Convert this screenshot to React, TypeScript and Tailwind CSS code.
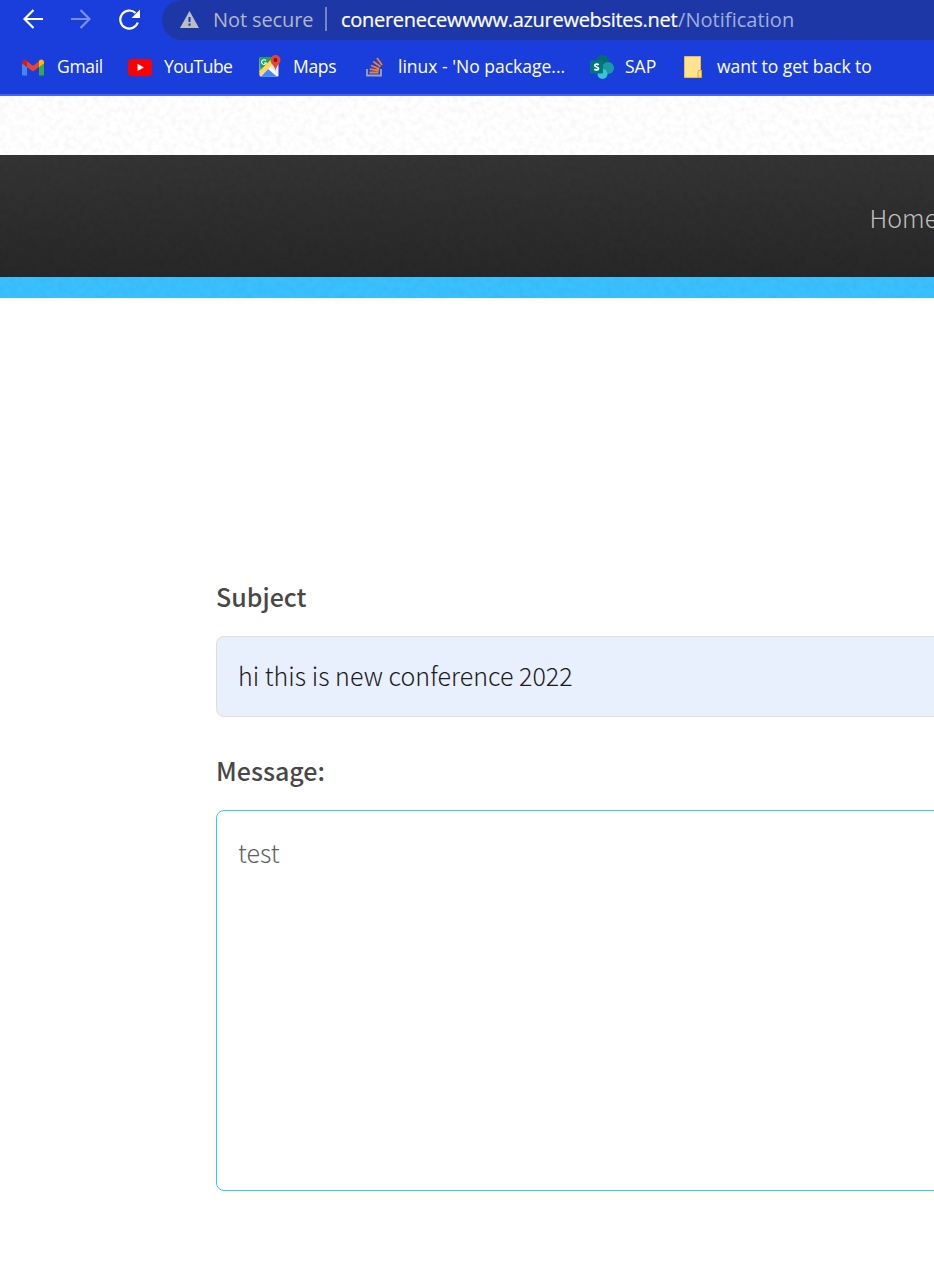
import type { ReactNode } from 'react';

const ui = "font-['Open_Sans','Noto_Sans',sans-serif]";
const page = "font-['Noto_Sans_CJK_SC',sans-serif]";

function Grain({ id, dark, opacity }: { id: string; dark: string; opacity: number }) {
  return (
    <svg className="absolute inset-0 h-full w-full" aria-hidden="true">
      <filter id={id} x="0" y="0" width="100%" height="100%">
        <feTurbulence type="fractalNoise" baseFrequency="0.17" numOctaves="3" seed="7" />
        <feColorMatrix values={`0 0 0 0 ${dark} 0 0 0 0 ${dark} 0 0 0 0 ${dark} ${opacity} 0 0 0 ${-opacity * 0.38}`} />
      </filter>
      <rect width="100%" height="100%" filter={`url(#${id})`} />
    </svg>
  );
}

function Bookmark({ icon, width, children }: { icon: ReactNode; width: string; children: ReactNode }) {
  return (
    <div className={`flex shrink-0 items-center ${width}`}>
      {icon}
      <span className="pb-[2px]">{children}</span>
    </div>
  );
}

function Gmail() {
  return (
    <svg className="mr-[13px] h-[17px] w-[22px] shrink-0" viewBox="0 0 22 17">
      <path d="M0 4v11.500Q0 16.500 1 16.500H5V7.500z" fill="#4285f4" />
      <path d="M22 4v11.500Q22 16.500 21 16.500H17V7.500z" fill="#34a853" />
      <path d="M5 2.200 11 6.700 17 2.200V8L11 12.500 5 8z" fill="#ea4335" />
      <path d="M0 4V3C0 .6 2.600-.2 4.200 1L5 1.700V8L0 4.500z" fill="#c5221f" />
      <path d="M22 4V3C22 .6 19.400-.2 17.800 1L17 1.700V8L22 4.500z" fill="#fbbc04" />
    </svg>
  );
}

function YouTube() {
  return (
    <svg className="mr-[12px] h-[17px] w-[24px] shrink-0" viewBox="0 0 24 17">
      <rect width="24" height="17" rx="3.500" fill="#f00" />
      <path d="M9.500 4.800 16 8.500 9.500 12z" fill="#fff" />
    </svg>
  );
}

function Maps() {
  return (
    <svg className="mb-[2px] mr-[12px] h-[22px] w-[22px] shrink-0" viewBox="0 0 22 22">
      <rect x="0.500" y="2" width="19" height="19.500" rx="1.500" fill="#e8eaed" />
      <path d="M.5 3.500Q.5 2 2 2H15L1.500 17z" fill="#1fa05b" />
      <path d="M.5 16 13 3.500 16 6.500 1 21z" fill="#ffda44" />
      <path d="M2 21.500 10.500 12.500 19.500 21.500z" fill="#4a89f3" />
      <path d="m9 14 2-2 8.500 8.500-1.500 1z" fill="#fff" />
      <path d="M7 5.700A2.400 2.400 0 1 0 7.300 8H5" fill="none" stroke="#fff" strokeWidth="1.100" />
      <path d="M16.500 0A5 5 0 0 0 11.500 5C11.500 9 15.500 10 16.500 15.500 17.500 10 21.500 9 21.500 5A5 5 0 0 0 16.500 0z" fill="#ea4335" />
      <circle cx="16.500" cy="5" r="1.900" fill="#811411" />
    </svg>
  );
}

function StackOverflow() {
  return (
    <svg className="mr-[14px] h-[20px] w-[18px] shrink-0" viewBox="0 0 18 20">
      <path d="M1 12v6.500H15V12" fill="none" stroke="#bcbbbb" strokeWidth="1.800" opacity=".8" />
      <path d="M3.500 15.500h9M3.800 12.200l9 1.300M5 8.500l8.300 3.300M7.300 4.500l7.200 5.200M11 1l5 7" fill="none" stroke="#f48024" strokeWidth="1.800" />
    </svg>
  );
}

function SharePoint() {
  return (
    <svg className="mr-[11px] h-[24px] w-[24px] shrink-0" viewBox="0 0 24 24">
      <circle cx="12.500" cy="6.500" r="6.500" fill="#036c70" />
      <circle cx="18" cy="13" r="6" fill="#1a9ba1" />
      <circle cx="12.500" cy="19" r="5" fill="#37c6d0" />
      <rect x="0" y="5.500" width="13" height="13" rx="1" fill="#03787c" />
      <path d="M8.700 9.700C7.600 8.900 4.800 8.700 4.700 10.500 4.700 12.300 8.500 11.700 8.500 13.600 8.400 15.300 5.500 15.200 4.300 14.300" fill="none" stroke="#fff" strokeWidth="1.700" />
    </svg>
  );
}

function Folder() {
  return (
    <svg className="mr-[15px] h-[22px] w-[18px] shrink-0" viewBox="0 0 18 22">
      <path d="M.5.500H16.500V14.500H17.500V21.500H.5z" fill="#ffe391" stroke="#e9bd45" />
      <path d="M14 21V15.500Q14 14.500 15 14.500H17.500V21.500z" fill="#ffe083" stroke="#dfaa24" />
    </svg>
  );
}

export default function App() {
  return (
    <div className="flex h-[1261px] w-full flex-col overflow-hidden bg-white">
      <header className={`h-[96px] shrink-0 border-b-2 border-[#4a66e0] bg-[#1a3edc] text-white ${ui}`}>
        <div className="flex h-10">
          <div className="flex h-[38px] w-[162px] shrink-0 items-center pl-[23px]">
            <svg className="h-[20px] w-[20px]" viewBox="0 0 20 20" fill="none" stroke="#fff" strokeWidth="2.200">
              <path d="M20 10H1.500M10.500 1 1.500 10l9 9" />
            </svg>
            <svg className="ml-[28px] h-[20px] w-[20px]" viewBox="0 0 20 20" fill="none" stroke="#7b90ec" strokeWidth="2.200">
              <path d="M0 10H18.500M9.500 1l9 9-9 9" />
            </svg>
            <svg className="ml-[28px] h-[21px] w-[21px]" viewBox="0 0 21 21" fill="none" stroke="#fff" strokeWidth="2.200">
              <path d="M18.800 13.500A9 9 0 1 1 16.500 4" />
              <path d="M21 .5V9H12.500z" fill="#fff" stroke="none" />
            </svg>
          </div>
          <div className="flex h-10 flex-1 items-center overflow-hidden rounded-bl-[20px] rounded-tl-[20px] bg-[#1e37a6] pl-[18px] text-[20px]">
            <svg className="mb-[2px] mr-[14px] h-[17px] w-[19px] shrink-0" viewBox="0 0 19 17">
              <path d="M9.500 0 19 17H0z" fill="#b8bfc5" />
              <path d="M9.500 6v5M9.500 12.500v2.200" stroke="#1e37a6" strokeWidth="2" />
            </svg>
            <span className="w-[112px] shrink-0 whitespace-nowrap tracking-[-0.1px] text-[#b1b8c3]">Not secure</span>
            <span className="mb-[2px] mr-[14px] h-[24px] w-[2px] shrink-0 bg-[#7886c5]" />
            <span className="w-[337px] shrink-0 whitespace-nowrap tracking-[-0.29px] [-webkit-text-stroke:0.2px_white]">conerenecewwww.azurewebsites.net</span>
            <span className="whitespace-nowrap tracking-[0.05px] text-[#a1aedd]">/Notification</span>
          </div>
        </div>
        <nav className="flex h-[54px] items-center whitespace-nowrap pl-[22px] text-[17.500px]">
          <Bookmark icon={<Gmail />} width="w-[106px] tracking-[-0.3px]">Gmail</Bookmark>
          <Bookmark icon={<YouTube />} width="w-[131px] tracking-[-0.5px]">YouTube</Bookmark>
          <Bookmark icon={<Maps />} width="w-[107px] tracking-[-0.3px]">Maps</Bookmark>
          <Bookmark icon={<StackOverflow />} width="w-[224px]">linux - 'No package...</Bookmark>
          <Bookmark icon={<SharePoint />} width="w-[94px]">SAP</Bookmark>
          <Bookmark icon={<Folder />} width="w-[220px] tracking-[-0.04px]">want to get back to</Bookmark>
        </nav>
      </header>

      <div className="relative h-[59px] shrink-0 bg-white">
        <Grain id="paper" dark="0.8" opacity={0.8} />
      </div>
      <div className={`relative flex h-[122px] shrink-0 items-center justify-end overflow-hidden bg-linear-to-b from-[#343434] to-[#272727] ${page}`}>
        <Grain id="charcoal" dark="0" opacity={0.12} />
        <span className="relative mt-[4px] w-[64.500px] whitespace-nowrap text-[25px] font-light text-[#bfbfbf]">Home</span>
      </div>
      <div className="relative h-[21px] shrink-0 bg-[#38c0ff]">
        <Grain id="sky" dark="0.1" opacity={0.15} />
      </div>

      <main className={`flex flex-col pl-[216px] text-[25px] leading-[40px] ${page}`}>
        <label className="mt-[278px] font-medium text-[#484848]">Subject</label>
        <div className="-mr-3 mt-[20px] flex h-[81px] items-center rounded-[8px] border border-[#dedede] bg-[#e8effd] pb-[3px] pl-[21px] font-light text-[#1c1c1c]">
          <span className="tracking-[0.04px]">hi this is new conference 2022</span>
        </div>
        <label className="mt-[33px] font-medium text-[#484848]">Message:</label>
        <div className="-mr-3 mt-[20px] h-[381px] rounded-[8px] border border-[#38c0ff] pl-[21px] pt-[21px] font-light text-[#606060]">
          test
        </div>
      </main>
    </div>
  );
}
